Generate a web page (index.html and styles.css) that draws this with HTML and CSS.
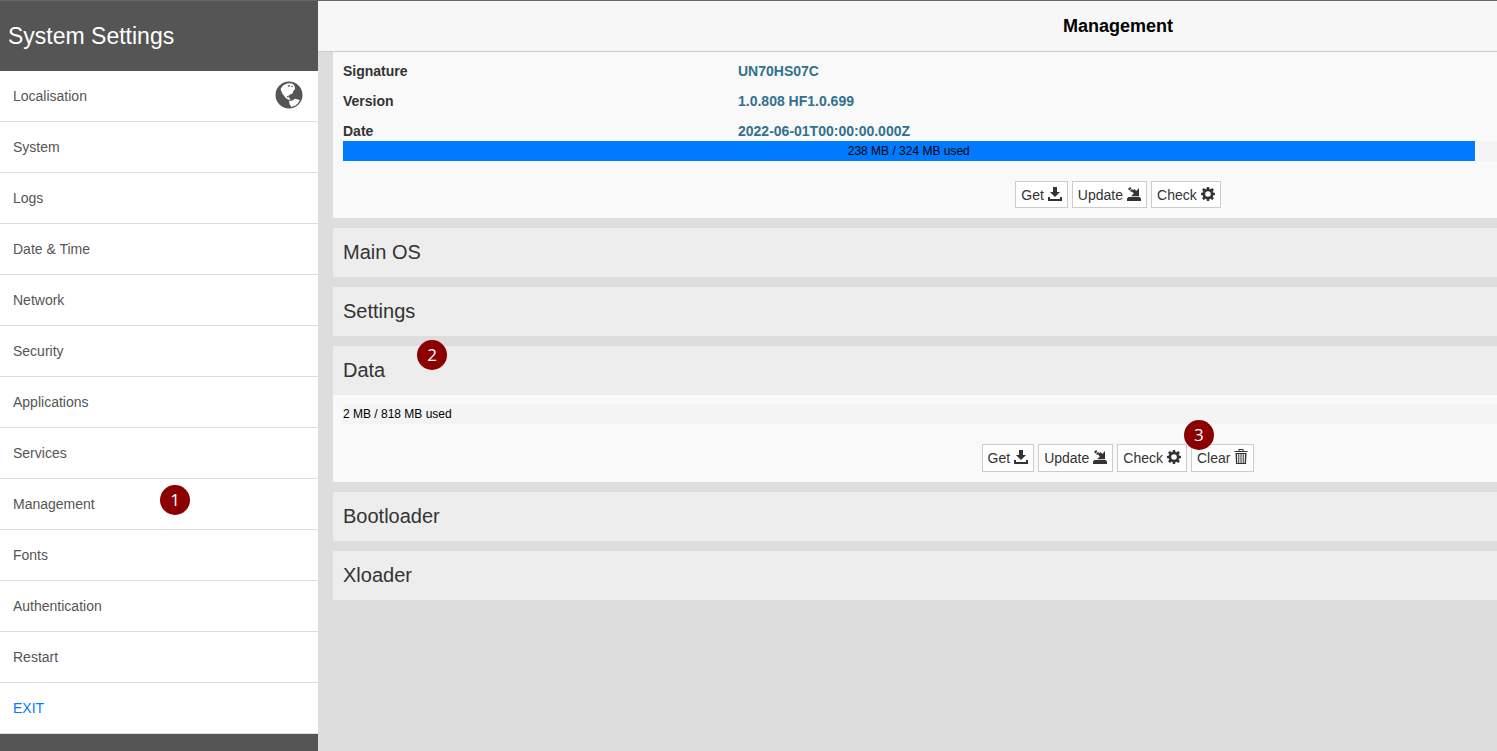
FILE: index.html
```html
<!DOCTYPE html>
<html lang="en">
<head>
  <meta charset="UTF-8" />
  <meta name="viewport" content="width=device-width, initial-scale=1.0" />
  <title>System Settings</title>
  <link rel="stylesheet" href="styles.css">
</head>

<body>
  <!-- Button icons -->
  <svg class="icon-defs" aria-hidden="true">
    <symbol id="icon-get" viewBox="0 0 14 14">
      <path d="M5 0h4v5h3L7 10 2 5h3zM0 10h2v2h10v-2h2v4H0z" />
    </symbol>
    <symbol id="icon-update" viewBox="0 0 14 14">
      <path d="M1.500 10h11l1.500 1.500V14H0v-2.500zM12 1v8.200H4l2.800-2.800L4.900 4.500 7.400 2l1.900 1.900zM1 2l2-2 1.400 1.400-2 2zM3 3.900l2-2 1.200 1.200-2 2z" />
    </symbol>
    <symbol id="icon-check" viewBox="0 0 14 14">
      <path fill-rule="evenodd" d="M5.900 0h2.200l.4 1.900 1 .4 1.700-1.200 1.700 1.700-1.200 1.700.4 1 1.900.4v2.200l-1.900.4-.4 1 1.200 1.700-1.700 1.700-1.700-1.200-1 .4-.4 1.900H5.900l-.4-1.900-1-.4-1.700 1.200-1.700-1.700 1.200-1.700-.4-1L0 8.100V5.900l1.900-.4.4-1L1.100 2.800l1.700-1.700 1.700 1.200 1-.4zM7 4.200a2.800 2.800 0 1 0 0 5.600 2.800 2.800 0 0 0 0-5.600z" />
    </symbol>
    <symbol id="icon-clear" viewBox="0 0 14 16">
      <path fill-rule="evenodd" d="M4.500 0h5v2H13.500v1H.5V2h4zM5.500 1v1h3V1zM1.500 4h11l-.5 11H2zM3 5l.3 9h1V5zM5.300 5v9h1.200V5zM7.500 5v9h1.200V5zM9.700 5v9h1L11 5z" />
    </symbol>
  </svg>

  <div class="app">
    <nav class="sidebar">
      <h1>System Settings</h1>
      <ul class="menu">
        <li>
          <a href="#localisation">Localisation
            <svg class="globe" viewBox="0 0 28 28" aria-hidden="true">
              <circle cx="14" cy="14" r="13.500" fill="#555" />
              <path fill="#fff" d="M5.500 8 8 4.500 12 2.500l4-.2 2 .8 1.800 2.500.2 2.700-1.500 1.500-1.200 3-2.200.7-1.600 1.500.7 1.700 1.300 1.800-1.500.5-3-1.800-2.300-3L7.500 13z" />
              <path fill="#555" d="M12.500 4.800l2.200-.8.6 1-1.800 1zM16.300 4.800l1.500.3-.2 1.200-1.400-.3zM11.800 15.500l1.500-1 .6 1.300-1.200.9z" />
              <path fill="#fff" d="M14 20l3.500-.5 2.500-1.700 3 .6 1.800.6-1.600 3-2.700 2.500-4 1.600-1.800-2.600z" />
            </svg>
          </a>
        </li>
        <li><a href="#system">System</a></li>
        <li><a href="#logs">Logs</a></li>
        <li><a href="#datetime">Date &amp; Time</a></li>
        <li><a href="#network">Network</a></li>
        <li><a href="#security">Security</a></li>
        <li><a href="#applications">Applications</a></li>
        <li><a href="#services">Services</a></li>
        <li><a href="#management">Management</a><span class="step step-menu">1</span></li>
        <li><a href="#fonts">Fonts</a></li>
        <li><a href="#authentication">Authentication</a></li>
        <li><a href="#restart">Restart</a></li>
        <li><a class="exit" href="#exit">EXIT</a></li>
      </ul>
    </nav>

    <main class="viewport">
      <div class="page">
        <header class="page-header"><h2>Management</h2></header>

        <div class="panels">
          <section class="panel panel-first">
            <table class="info">
              <tr><th scope="row">Signature</th><td>UN70HS07C</td></tr>
              <tr><th scope="row">Version</th><td>1.0.808 HF1.0.699</td></tr>
              <tr><th scope="row">Date</th><td>2022-06-01T00:00:00.000Z</td></tr>
            </table>
            <div class="usage"><div class="usage-bar" style="width: 73%">238 MB / 324 MB used</div></div>
            <div class="buttons">
              <button type="button">Get <svg class="icon"><use href="#icon-get" /></svg></button>
              <button type="button">Update <svg class="icon"><use href="#icon-update" /></svg></button>
              <button type="button">Check <svg class="icon"><use href="#icon-check" /></svg></button>
            </div>
          </section>

          <section class="panel"><h3>Main OS</h3></section>
          <section class="panel"><h3>Settings</h3></section>

          <section class="panel">
            <h3>Data<span class="step step-data">2</span></h3>
            <div class="panel-body">
              <div class="usage"><div class="usage-bar" style="width: 0%">2 MB / 818 MB used</div></div>
              <div class="buttons">
                <button type="button">Get <svg class="icon"><use href="#icon-get" /></svg></button>
                <button type="button">Update <svg class="icon"><use href="#icon-update" /></svg></button>
                <button type="button">Check <svg class="icon"><use href="#icon-check" /></svg></button>
                <button type="button">Clear <svg class="icon icon-tall"><use href="#icon-clear" /></svg><span class="step step-clear">3</span></button>
              </div>
            </div>
          </section>

          <section class="panel"><h3>Bootloader</h3></section>
          <section class="panel"><h3>Xloader</h3></section>
        </div>
      </div>
    </main>
  </div>
</body>
</html>
```

FILE: styles.css
```css
* {
  box-sizing: border-box;
}

body {
  margin: 0;
  font-family: "Liberation Sans", Arial, sans-serif;
  font-size: 14px;
  color: #333;
  background-color: #ddd;
}

h1, h2, h3 {
  margin: 0;
}

.icon-defs {
  display: none;
}

.app {
  display: flex;
  min-height: 100vh;
  border-top: 1px solid #666;
}

/* Sidebar */
.sidebar {
  flex: 0 0 318px;
  background-color: #555;
}

.sidebar h1 {
  padding: 0 8px;
  font-size: 23px;
  font-weight: normal;
  line-height: 70px;
  color: white;
}

.menu {
  margin: 0;
  padding: 0;
  list-style: none;
}

.menu li {
  position: relative;
  border-bottom: 1px solid #ddd;
  background-color: white;
}

.menu a {
  display: flex;
  align-items: center;
  justify-content: space-between;
  height: 50px;
  padding: 0 15px 0 13px;
  color: #555;
  text-decoration: none;
}

.menu a.exit {
  color: #007bff;
}

.globe {
  width: 28px;
  height: 28px;
  margin-bottom: 2px;
}

/* Content is wide and gets cut off on smaller windows */
.viewport {
  flex: 1;
  min-width: 0;
  overflow: hidden;
}

.page {
  min-width: 1600px;
}

.page-header {
  border-bottom: 1px solid #ccc;
  background-color: #f7f7f7;
}

.page-header h2 {
  font-size: 18px;
  line-height: 50px;
  text-align: center;
  color: black;
}

.panels {
  display: flex;
  flex-direction: column;
  gap: 10px;
  padding: 0 15px;
}

.panel {
  background-color: #f9f9f9;
}

.panel-first {
  padding: 4px 10px 10px;
}

.panel-body {
  padding: 9px 10px 10px;
}

.panel h3 {
  position: relative;
  padding: 0 10px;
  font-size: 20px;
  font-weight: normal;
  line-height: 49px;
  background-color: #ededed;
}

.info {
  width: 100%;
  border-collapse: collapse;
  line-height: 20px;
}

.info th, .info td {
  padding: 5px 0;
  text-align: left;
}

.info tr:last-child > * {
  padding-bottom: 0;
}

.info th {
  width: 395px;
}

.info td {
  font-weight: bold;
  color: #31708f;
}

.usage {
  background-color: #f4f4f4;
}

.usage-bar {
  font-size: 12px;
  line-height: 20px;
  text-align: center;
  white-space: nowrap;
  color: black;
  background-color: #007bff;
}

.buttons {
  display: flex;
  justify-content: center;
  gap: 4px;
  margin-top: 20px;
}

button {
  position: relative;
  display: flex;
  align-items: center;
  gap: 4px;
  height: 27px;
  padding: 0 5px;
  border: 1px solid #ccc;
  font: inherit;
  color: #333;
  background-color: white;
  cursor: pointer;
}

.panel-body button {
  height: 28px;
}

button:hover {
  background-color: #eee;
}

.icon {
  width: 14px;
  height: 14px;
  margin-bottom: 2px;
  fill: #333;
}

.icon-tall {
  height: 16px;
}

/* Numbered step markers */
.step {
  position: absolute;
  width: 30px;
  height: 30px;
  border-radius: 50%;
  font-family: "Open Sans", sans-serif;
  font-size: 17px;
  line-height: 29px;
  text-align: center;
  color: white;
  background-color: #8b0000;
}

.step-menu {
  top: 6px;
  left: 160px;
}

.step-data {
  top: -6px;
  left: 84px;
}

.step-clear {
  top: -25px;
  left: -8px;
}
```
